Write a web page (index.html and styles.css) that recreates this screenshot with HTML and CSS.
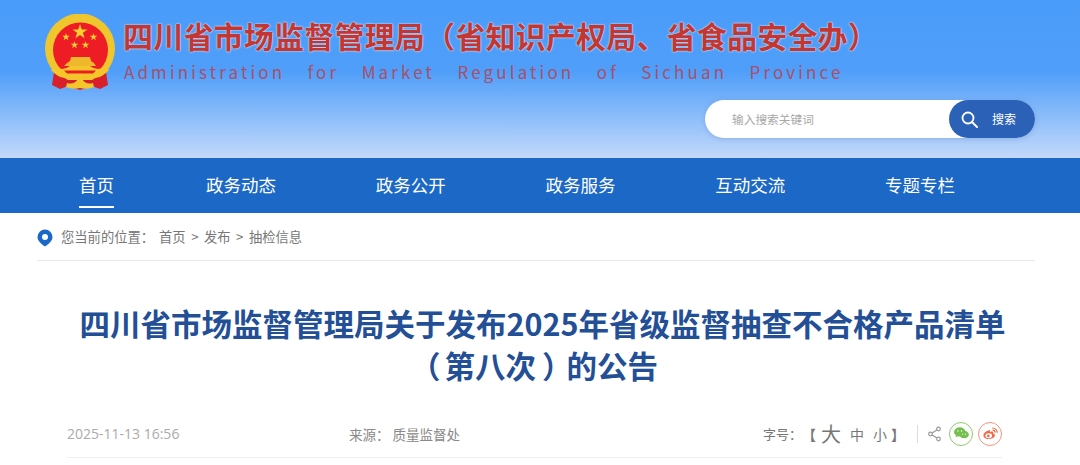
FILE: index.html
```html
<!DOCTYPE html>
<html lang="zh">
<head>
<meta charset="utf-8">
<title>四川省市场监督管理局</title>
<link rel="stylesheet" href="styles.css">
</head>
<body>
<header class="masthead">
  <div class="brand">
    <svg class="emblem" width="70" height="78" viewBox="45 14 70 78">
      <circle cx="80" cy="48.500" r="35" fill="#f0c62e"/>
      <circle cx="80.500" cy="50" r="27.500" fill="#ee1c25"/>
      <path d="M80 24 l1.800 5.400 5.700 0 -4.600 3.400 1.700 5.500 -4.600 -3.300 -4.600 3.300 1.700 -5.500 -4.600 -3.400 5.700 0 Z" fill="#f8d12e"/>
      <path d="M66 33 l.9 2.800 2.900 0 -2.300 1.700 .9 2.800 -2.400 -1.700 -2.400 1.700 .9 -2.800 -2.300 -1.700 2.900 0 Z" fill="#f8d12e"/>
      <path d="M93.500 33 l.9 2.800 2.900 0 -2.300 1.700 .9 2.800 -2.400 -1.700 -2.400 1.700 .9 -2.800 -2.300 -1.700 2.900 0 Z" fill="#f8d12e"/>
      <path d="M74.500 41 l.9 2.800 2.900 0 -2.300 1.700 .9 2.800 -2.400 -1.700 -2.400 1.700 .9 -2.800 -2.300 -1.700 2.900 0 Z" fill="#f8d12e"/>
      <path d="M85.500 41 l.9 2.800 2.900 0 -2.300 1.700 .9 2.800 -2.400 -1.700 -2.400 1.700 .9 -2.800 -2.300 -1.700 2.900 0 Z" fill="#f8d12e"/>
      <path d="M71 57 H90 L91 61 L94 63 L96 66 H64 L67 63 L70 61 Z" fill="#efb72e"/>
      <path d="M54 72 L52 85 L60 89 L68 86 L80 90 L92 86 L100 89 L108 85 L106 72 L92 80 H68 Z" fill="#d81f2a"/>
      <path d="M55 66 Q62 72 70 66 H90 Q98 72 106 66 L109 70 Q100 80 92 77 Q86 76 80 79 Q74 76 68 77 Q60 80 51 70 Z" fill="#f5c62a"/>
      <path d="M64 70.500 H96 L93 73.500 H67 Z" fill="#ee1c25"/>
      <path d="M67 83 Q74 85 78 79 L80 77 L82 79 Q86 85 93 83 L94 87 Q88 90 80 88 Q72 90 66 87 Z" fill="#f5c62a"/>
    </svg>
    <div class="brand-text">
      <div class="brand-cn">四川省市场监督管理局（省知识产权局、省食品安全办）</div>
      <div class="brand-en">Administration for Market Regulation of Sichuan Province</div>
    </div>
  </div>
  <form class="search">
    <span class="search-hint">输入搜索关键词</span>
    <span class="search-btn">
      <svg width="17" height="17" viewBox="0 0 17 17"><circle cx="7" cy="7" r="5.500" fill="none" stroke="#fff" stroke-width="1.800"/><path d="M11 11 L16 16" stroke="#fff" stroke-width="2" stroke-linecap="round"/></svg>
      <span class="search-label">搜索</span>
    </span>
  </form>
</header>
<nav class="nav">
  <a class="nav-item nav-active">首页</a>
  <a class="nav-item">政务动态</a>
  <a class="nav-item">政务公开</a>
  <a class="nav-item">政务服务</a>
  <a class="nav-item">互动交流</a>
  <a class="nav-item">专题专栏</a>
</nav>
<main class="content">
  <div class="crumbs">
    <svg class="pin" width="16" height="18" viewBox="0 0 16 18"><path d="M8 0.500 A7.500 7.500 0 0 1 15.500 8 C15.500 12 11 15.500 8 17.500 C5 15.500 .5 12 .5 8 A7.500 7.500 0 0 1 8 .5 Z" fill="#1a68c8"/><circle cx="8" cy="8" r="3" fill="#fff"/></svg>
    <span class="crumb-lead">您当前的位置：</span>
    <span class="crumb-path">首页 &gt; 发布 &gt; 抽检信息</span>
  </div>
  <h1 class="title">
    <span class="title-main">四川省市场监督管理局关于发布2025年省级监督抽查不合格产品清单</span>
    <span class="title-sub"><span class="paren-open">（</span>第八次<span class="paren-close">）</span>的公告</span>
  </h1>
  <div class="meta">
    <span class="meta-date">2025-11-13 16:56</span>
    <span class="meta-source">来源： 质量监督处</span>
    <div class="meta-tools">
      <span class="size-label">字号：</span>
      <span class="bracket">【</span><span class="size-l">大</span><span class="size-m">中</span><span class="size-s">小</span><span class="bracket bracket-end">】</span>
      <span class="divider"></span>
      <svg class="share" width="13" height="16" viewBox="0 0 13 16"><path d="M10.500 3 L2.500 8 L10.500 13" fill="none" stroke="#999" stroke-width="1.200"/><circle cx="10.500" cy="3" r="1.800" fill="#fff" stroke="#999" stroke-width="1.200"/><circle cx="2.500" cy="8" r="1.800" fill="#fff" stroke="#999" stroke-width="1.200"/><circle cx="10.500" cy="13" r="1.800" fill="#fff" stroke="#999" stroke-width="1.200"/></svg>
      <span class="round round-wx">
        <svg width="17" height="14" viewBox="0 0 17 14"><ellipse cx="6.500" cy="5.500" rx="6.500" ry="5.200" fill="#76c04f"/><path d="M2.500 8.500 L1.800 11.500 L5.500 9.800 Z" fill="#76c04f"/><ellipse cx="11.500" cy="8.500" rx="5.300" ry="4.300" fill="#76c04f"/><circle cx="4.500" cy="4.500" r=".8" fill="#fff"/><circle cx="8.500" cy="4.500" r=".8" fill="#fff"/><circle cx="10" cy="8" r=".6" fill="#fff"/><circle cx="13" cy="8" r=".6" fill="#fff"/></svg>
      </span>
      <span class="round round-wb">
        <svg width="17" height="14" viewBox="0 0 17 14"><path d="M7 3.500 C3 4.500 0 7.500 .5 10 C1 12.500 4 13.800 7.500 13.500 C11 13.200 13.500 11.500 13.500 9.500 C13.500 8 12 7.500 11.500 7.300 C12 6 11.500 4.500 9.500 5 C8 5.500 7.500 5.800 7.800 4.800 C8 3.600 7.800 3.300 7 3.500 Z" fill="#f0694a"/><ellipse cx="6.500" cy="9.800" rx="3.800" ry="2.800" fill="#fff"/><circle cx="6" cy="10" r="1.500" fill="#f0694a"/><path d="M10.500 1 A5.500 5.500 0 0 1 16.200 6.500 M10.800 3.500 A3 3 0 0 1 13.800 6.300" fill="none" stroke="#f0694a" stroke-width="1.300"/></svg>
      </span>
    </div>
  </div>
</main>
</body>
</html>
```
FILE: styles.css
```css
* { box-sizing: border-box; }
html, body { margin: 0; padding: 0; }
body {
  width: 1080px;
  height: 465px;
  overflow: hidden;
  background: #fff;
  font-family: "Noto Sans CJK SC", "Liberation Sans", sans-serif;
}
.masthead {
  height: 158px;
  padding: 14px 45px 0;
  background: linear-gradient(180deg, #4a9cfa 0%, #4f9ef9 45%, #c3d9fa 100%);
  display: flex;
  flex-direction: column;
}
.brand { display: flex; align-items: flex-start; gap: 8px; }
.emblem { flex: none; }
.brand-cn {
  font-size: 30px;
  font-weight: 700;
  line-height: 42px;
  letter-spacing: .2px;
  color: #c23633;
  white-space: nowrap;
  text-shadow: 0 0 2px #e4ecf8, 0 0 1px #e4ecf8;
}
.brand-en {
  font-family: "Noto Sans CJK SC", sans-serif;
  font-size: 17px;
  line-height: 24px;
  margin-top: 4px;
  padding-left: 1px;
  letter-spacing: 3.120px;
  word-spacing: 15.500px;
  color: #a8506a;
  white-space: nowrap;
}
.search {
  align-self: flex-end;
  width: 330px;
  height: 38px;
  margin-top: 8px;
  background: #fff;
  border-radius: 19px;
  display: flex;
  align-items: center;
  justify-content: space-between;
  box-shadow: 0 1px 5px rgba(60, 100, 170, .25);
}
.search-hint { font-size: 11.700px; color: #a8a8a8; padding: 0 0 2px 27px; }
.search-btn {
  width: 86px;
  height: 38px;
  border-radius: 19px;
  background: #2b62b8;
  color: #fff;
  display: flex;
  align-items: center;
  padding-left: 12px;
  gap: 14px;
}
.search-label { font-size: 12px; padding-bottom: 2px; }
.nav {
  height: 55px;
  background: #1b68c7;
  display: flex;
  padding-left: 79px;
  gap: 92px;
}
.nav-item {
  color: #fff;
  font-size: 17.500px;
  line-height: 54px;
  height: 50px;
  white-space: nowrap;
}
.nav-item:nth-child(n+2) { margin-right: 7.750px; }
.nav-active { border-bottom: 2px solid #fff; }
.content { margin: 0 45px 0 37px; }
.crumbs {
  height: 48px;
  border-bottom: 1px solid #e8e8e8;
  display: flex;
  align-items: center;
  gap: 8px;
  font-size: 13.300px;
  color: #777;
}
.pin { margin-top: 3px; }
.crumb-lead { margin-right: -3px; }
.crumb-path { word-spacing: 2.500px; }
.title {
  margin: 41px 0 0;
  text-align: center;
  font-size: 30.500px;
  line-height: 42px;
  font-weight: 700;
  color: #234f96;
}
.title-main { display: block; padding-left: 13px; white-space: nowrap; }
.title-sub { display: block; }
.paren-open { display: inline-block; margin: 0 4px 0 -4px; }
.paren-close { display: inline-block; margin-left: 6px; letter-spacing: -6px; }
.meta {
  margin: 24px 33px 0 30px;
  height: 48px;
  border-bottom: 1px solid #f0f0f0;
  display: flex;
  align-items: center;
  font-size: 14px;
  color: #999;
}
.meta-date { width: 282px; font-family: "Open Sans", sans-serif; font-size: 14px; color: #aaa; }
.meta-source { font-size: 13.500px; color: #888; }
.meta-tools { margin-left: auto; display: flex; align-items: center; color: #777; }
.size-label { font-size: 13px; }
.bracket { font-size: 14px; font-weight: 700; }
.bracket-end { margin-left: 4px; }
.size-l { font-size: 20px; margin-left: 5px; }
.size-m { font-size: 14px; margin-left: 9px; }
.size-s { font-size: 14px; margin-left: 9px; }
.divider { width: 1px; height: 18px; background: #ddd; margin: 0 10px 0 12px; }
.share { margin-right: 8px; }
.round {
  width: 24px;
  height: 24px;
  border-radius: 50%;
  display: flex;
  align-items: center;
  justify-content: center;
  background: #fff;
}
.round svg { width: 15px; height: 12.500px; }
.round-wx { border: 1px solid #8ecb6c; margin-right: 5px; }
.round-wb { border: 1px solid #f5957a; }
```
